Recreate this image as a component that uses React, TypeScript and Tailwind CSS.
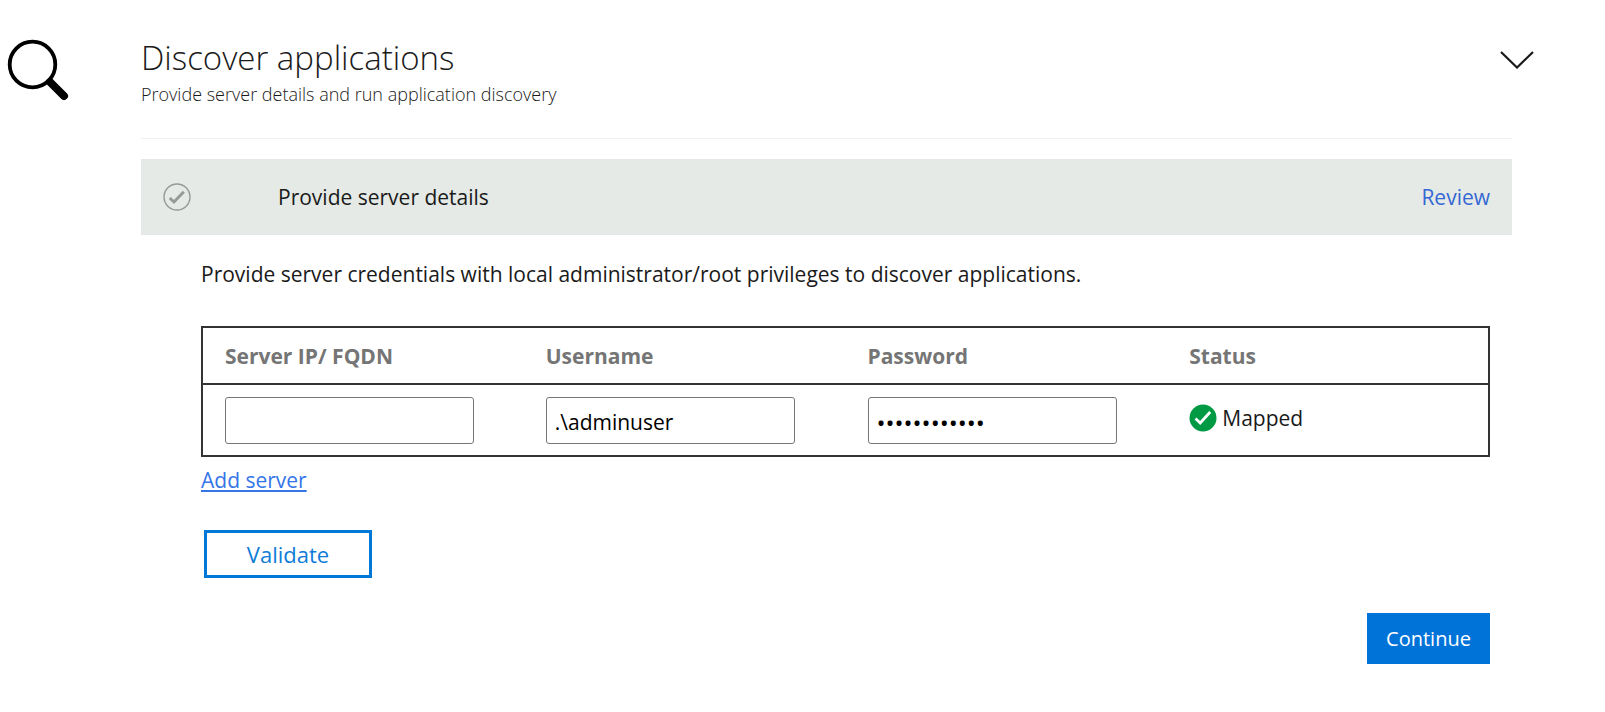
import { useState } from "react";

function SearchIcon() {
  return (
    <svg viewBox="0 0 62 62" className="h-[62px] w-[62px]" fill="none" stroke="#000" aria-hidden="true">
      <circle cx="25.500" cy="25.500" r="22.800" strokeWidth="3.800" />
      <path d="M43 43 57 57" strokeWidth="8" strokeLinecap="round" />
    </svg>
  );
}

function ChevronIcon() {
  return (
    <svg viewBox="0 0 34 18" className="h-[18px] w-[34px]" fill="none" stroke="#1a1a1a" strokeWidth="2.200" aria-hidden="true">
      <path d="M1 1 17 16.500 33 1" />
    </svg>
  );
}

function StepDoneIcon() {
  return (
    <svg viewBox="0 0 28 28" className="h-7 w-7" fill="none" stroke="#979998" aria-hidden="true">
      <circle cx="14" cy="14" r="13" strokeWidth="1.400" />
      <path d="m6.800 15 4.200 4 9.800-10.200" strokeWidth="3" />
    </svg>
  );
}

function MappedIcon() {
  return (
    <svg viewBox="0 0 28 28" className="h-7 w-7 shrink-0" fill="none" aria-hidden="true">
      <circle cx="14" cy="14" r="13.500" fill="#009a44" />
      <path d="m6.500 14.500 4.700 4.500 10-11" stroke="#fff" strokeWidth="2.800" />
    </svg>
  );
}

const columns = ["Server IP/ FQDN", "Username", "Password", "Status"];

const inputClass =
  "block h-[47px] w-[249px] rounded-[3px] border border-[#767676] bg-white px-2 pt-1 text-black outline-none";

export default function App() {
  const [server, setServer] = useState("");
  const [username, setUsername] = useState(".\\adminuser");
  const [password, setPassword] = useState("adminuser123");

  return (
    <main className="min-h-screen bg-white pb-10 pr-[71px] pt-[38px] font-['Open_Sans','Noto_Sans',sans-serif] text-[21px] leading-7 text-[#1a1a1a]">
      <header className="flex items-start">
        <div className="w-[141px] shrink-0 pl-[7px] pt-px">
          <SearchIcon />
        </div>
        <div className="flex-1">
          <h1 className="text-[33px] font-light leading-10">Discover applications</h1>
          <p className="pt-1 text-[18px] font-light leading-6">Provide server details and run application discovery</p>
        </div>
        <button type="button" aria-label="Collapse section" className="mt-[13px]">
          <ChevronIcon />
        </button>
      </header>

      <div className="ml-[141px] mr-[22px]">
        <hr className="mt-8 border-[#f0f0f0]" />
        <section className="mt-5 flex h-[76px] items-center bg-[#e5eae6] px-[22px]">
          <StepDoneIcon />
          <h2 className="ml-[87px] flex-1">Provide server details</h2>
          <a href="#review" className="text-[#3568d4]">Review</a>
        </section>

        <div className="pl-[60px] pr-[22px] pt-[25px]">
          <p>Provide server credentials with local administrator/root privileges to discover applications.</p>

          <table className="mt-[38px] w-full table-fixed border-collapse border-2 border-[#333]">
            <thead>
              <tr className="border-b-2 border-[#333] text-left text-[#757575]">
                {columns.map((column) => (
                  <th key={column} scope="col" className="h-[57px] pl-[22px] font-bold">{column}</th>
                ))}
              </tr>
            </thead>
            <tbody>
              <tr className="h-[72px]">
                <td className="pl-[22px]">
                  <input aria-label="Server IP/ FQDN" value={server} onChange={(e) => setServer(e.target.value)} className={inputClass} />
                </td>
                <td className="pl-[22px]">
                  <input aria-label="Username" value={username} onChange={(e) => setUsername(e.target.value)} className={inputClass} />
                </td>
                <td className="pl-[22px]">
                  <input type="password" aria-label="Password" value={password} onChange={(e) => setPassword(e.target.value)} className={`${inputClass} text-[24px]`} />
                </td>
                <td className="pb-1 pl-[22px]">
                  <div className="flex items-center gap-[5px]">
                    <MappedIcon />
                    <span>Mapped</span>
                  </div>
                </td>
              </tr>
            </tbody>
          </table>

          <a href="#add-server" className="mt-[9px] inline-block text-[#3575e8] underline">Add server</a>

          <div className="mt-9 pl-[3px]">
            <button type="button" className="h-12 w-[168px] border-[3px] border-[#0078d7] bg-white text-[22px] text-[#0f7cd9]">Validate</button>
          </div>
          <div className="mt-[35px] flex justify-end">
            <button type="button" className="h-[51px] w-[123px] bg-[#0073d9] text-[20px] text-white">Continue</button>
          </div>
        </div>
      </div>
    </main>
  );
}
